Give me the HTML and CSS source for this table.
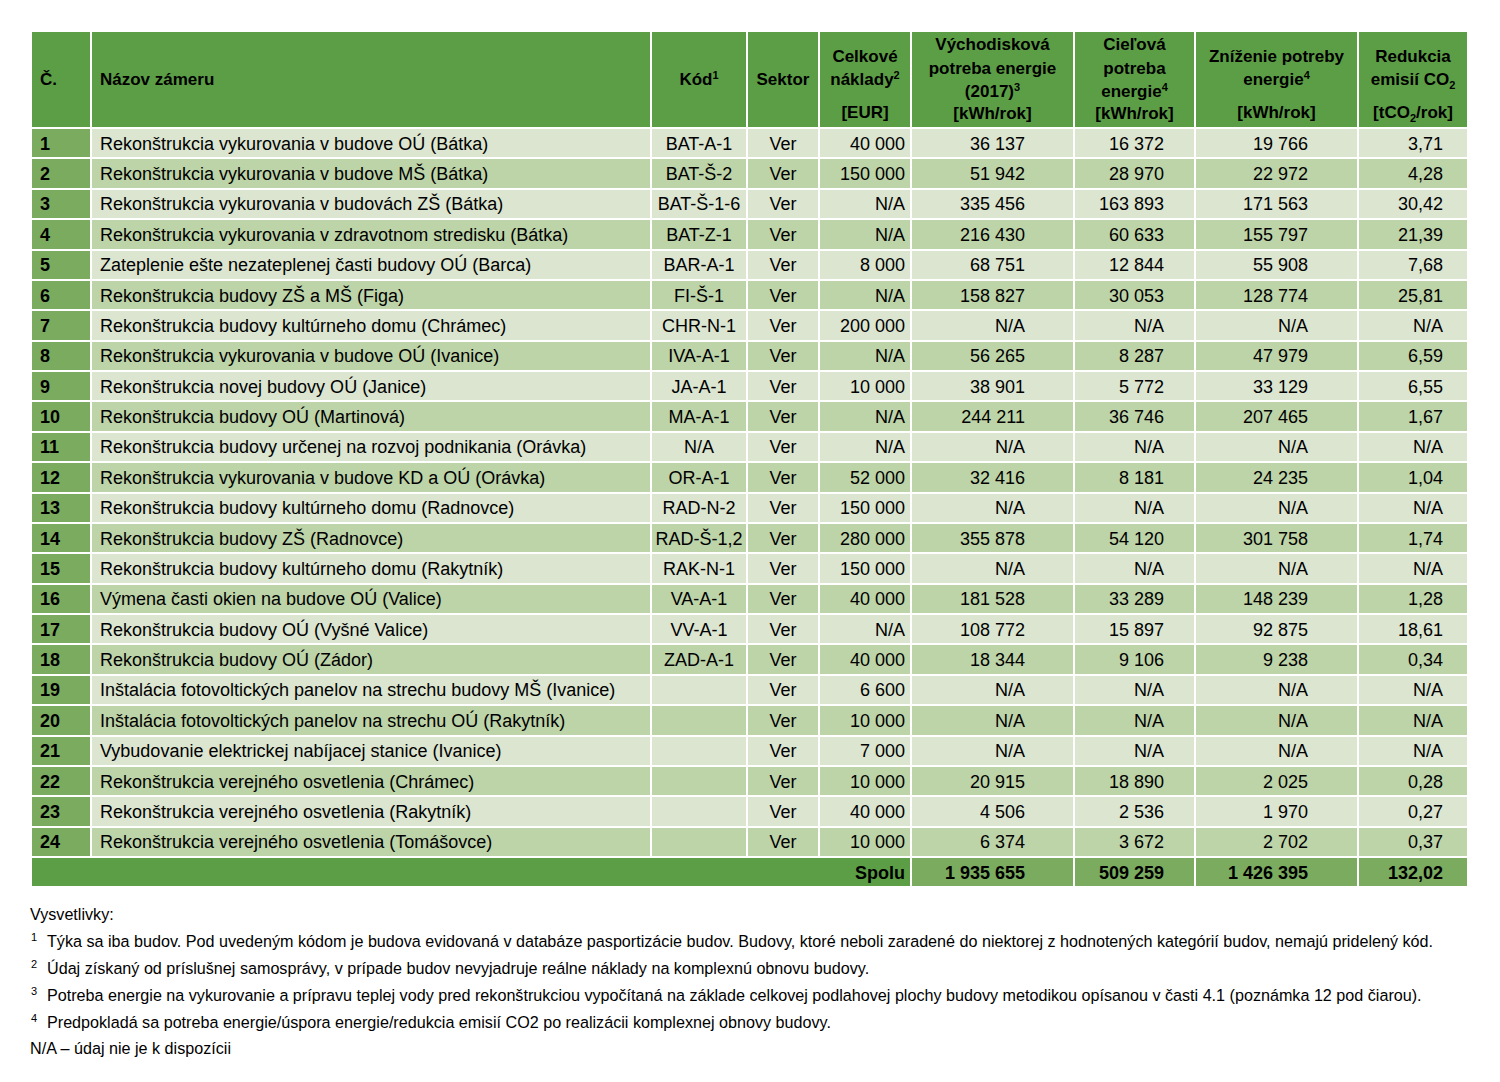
FILE: index.html
```html
<!DOCTYPE html>
<html lang="sk">
<head>
<meta charset="utf-8">
<title>Zámery</title>
<link rel="stylesheet" href="styles.css">
</head>
<body>
<div class="page">
<table class="grid">
<colgroup>
<col class="w1"><col class="w2"><col class="w3"><col class="w4"><col class="w5"><col class="w6"><col class="w7"><col class="w8"><col class="w9">
</colgroup>
<thead>
<tr>
<th class="hl">Č.</th>
<th class="hl">Názov zámeru</th>
<th>Kód<sup>1</sup></th>
<th>Sektor</th>
<th><div class="hw"><div class="ht"><span>Celkové</span><span>náklady<sup>2</sup></span></div><div class="hu">[EUR]</div></div></th>
<th><div class="hw"><div class="ht"><span>Východisková</span><span>potreba energie</span><span>(2017)<sup>3</sup></span></div><div class="hu">[kWh/rok]</div></div></th>
<th><div class="hw"><div class="ht"><span>Cieľová</span><span>potreba</span><span>energie<sup>4</sup></span></div><div class="hu">[kWh/rok]</div></div></th>
<th><div class="hw"><div class="ht"><span>Zníženie potreby</span><span>energie<sup>4</sup></span></div><div class="hu">[kWh/rok]</div></div></th>
<th><div class="hw"><div class="ht"><span>Redukcia</span><span>emisií CO<sub>2</sub></span></div><div class="hu">[tCO<sub>2</sub>/rok]</div></div></th>
</tr>
</thead>
<tbody>
<tr class="odd"><td class="n">1</td><td class="nm">Rekonštrukcia vykurovania v budove OÚ (Bátka)</td><td class="c">BAT-A-1</td><td class="c">Ver</td><td class="r5">40 000</td><td class="rv">36 137</td><td class="rc">16 372</td><td class="rz">19 766</td><td class="rr">3,71</td></tr>
<tr class="even"><td class="n">2</td><td class="nm">Rekonštrukcia vykurovania v budove MŠ (Bátka)</td><td class="c">BAT-Š-2</td><td class="c">Ver</td><td class="r5">150 000</td><td class="rv">51 942</td><td class="rc">28 970</td><td class="rz">22 972</td><td class="rr">4,28</td></tr>
<tr class="odd"><td class="n">3</td><td class="nm">Rekonštrukcia vykurovania v budovách ZŠ (Bátka)</td><td class="c">BAT-Š-1-6</td><td class="c">Ver</td><td class="r5">N/A</td><td class="rv">335 456</td><td class="rc">163 893</td><td class="rz">171 563</td><td class="rr">30,42</td></tr>
<tr class="even"><td class="n">4</td><td class="nm">Rekonštrukcia vykurovania v zdravotnom stredisku (Bátka)</td><td class="c">BAT-Z-1</td><td class="c">Ver</td><td class="r5">N/A</td><td class="rv">216 430</td><td class="rc">60 633</td><td class="rz">155 797</td><td class="rr">21,39</td></tr>
<tr class="odd"><td class="n">5</td><td class="nm">Zateplenie ešte nezateplenej časti budovy OÚ (Barca)</td><td class="c">BAR-A-1</td><td class="c">Ver</td><td class="r5">8 000</td><td class="rv">68 751</td><td class="rc">12 844</td><td class="rz">55 908</td><td class="rr">7,68</td></tr>
<tr class="even"><td class="n">6</td><td class="nm">Rekonštrukcia budovy ZŠ a MŠ (Figa)</td><td class="c">FI-Š-1</td><td class="c">Ver</td><td class="r5">N/A</td><td class="rv">158 827</td><td class="rc">30 053</td><td class="rz">128 774</td><td class="rr">25,81</td></tr>
<tr class="odd"><td class="n">7</td><td class="nm">Rekonštrukcia budovy kultúrneho domu (Chrámec)</td><td class="c">CHR-N-1</td><td class="c">Ver</td><td class="r5">200 000</td><td class="rv">N/A</td><td class="rc">N/A</td><td class="rz">N/A</td><td class="rr">N/A</td></tr>
<tr class="even"><td class="n">8</td><td class="nm">Rekonštrukcia vykurovania v budove OÚ (Ivanice)</td><td class="c">IVA-A-1</td><td class="c">Ver</td><td class="r5">N/A</td><td class="rv">56 265</td><td class="rc">8 287</td><td class="rz">47 979</td><td class="rr">6,59</td></tr>
<tr class="odd"><td class="n">9</td><td class="nm">Rekonštrukcia novej budovy OÚ (Janice)</td><td class="c">JA-A-1</td><td class="c">Ver</td><td class="r5">10 000</td><td class="rv">38 901</td><td class="rc">5 772</td><td class="rz">33 129</td><td class="rr">6,55</td></tr>
<tr class="even"><td class="n">10</td><td class="nm">Rekonštrukcia budovy OÚ (Martinová)</td><td class="c">MA-A-1</td><td class="c">Ver</td><td class="r5">N/A</td><td class="rv">244 211</td><td class="rc">36 746</td><td class="rz">207 465</td><td class="rr">1,67</td></tr>
<tr class="odd"><td class="n">11</td><td class="nm">Rekonštrukcia budovy určenej na rozvoj podnikania (Orávka)</td><td class="c">N/A</td><td class="c">Ver</td><td class="r5">N/A</td><td class="rv">N/A</td><td class="rc">N/A</td><td class="rz">N/A</td><td class="rr">N/A</td></tr>
<tr class="even"><td class="n">12</td><td class="nm">Rekonštrukcia vykurovania v budove KD a OÚ (Orávka)</td><td class="c">OR-A-1</td><td class="c">Ver</td><td class="r5">52 000</td><td class="rv">32 416</td><td class="rc">8 181</td><td class="rz">24 235</td><td class="rr">1,04</td></tr>
<tr class="odd"><td class="n">13</td><td class="nm">Rekonštrukcia budovy kultúrneho domu (Radnovce)</td><td class="c">RAD-N-2</td><td class="c">Ver</td><td class="r5">150 000</td><td class="rv">N/A</td><td class="rc">N/A</td><td class="rz">N/A</td><td class="rr">N/A</td></tr>
<tr class="even"><td class="n">14</td><td class="nm">Rekonštrukcia budovy ZŠ (Radnovce)</td><td class="c">RAD-Š-1,2</td><td class="c">Ver</td><td class="r5">280 000</td><td class="rv">355 878</td><td class="rc">54 120</td><td class="rz">301 758</td><td class="rr">1,74</td></tr>
<tr class="odd"><td class="n">15</td><td class="nm">Rekonštrukcia budovy kultúrneho domu (Rakytník)</td><td class="c">RAK-N-1</td><td class="c">Ver</td><td class="r5">150 000</td><td class="rv">N/A</td><td class="rc">N/A</td><td class="rz">N/A</td><td class="rr">N/A</td></tr>
<tr class="even"><td class="n">16</td><td class="nm">Výmena časti okien na budove OÚ (Valice)</td><td class="c">VA-A-1</td><td class="c">Ver</td><td class="r5">40 000</td><td class="rv">181 528</td><td class="rc">33 289</td><td class="rz">148 239</td><td class="rr">1,28</td></tr>
<tr class="odd"><td class="n">17</td><td class="nm">Rekonštrukcia budovy OÚ (Vyšné Valice)</td><td class="c">VV-A-1</td><td class="c">Ver</td><td class="r5">N/A</td><td class="rv">108 772</td><td class="rc">15 897</td><td class="rz">92 875</td><td class="rr">18,61</td></tr>
<tr class="even"><td class="n">18</td><td class="nm">Rekonštrukcia budovy OÚ (Zádor)</td><td class="c">ZAD-A-1</td><td class="c">Ver</td><td class="r5">40 000</td><td class="rv">18 344</td><td class="rc">9 106</td><td class="rz">9 238</td><td class="rr">0,34</td></tr>
<tr class="odd"><td class="n">19</td><td class="nm">Inštalácia fotovoltických panelov na strechu budovy MŠ (Ivanice)</td><td class="c"></td><td class="c">Ver</td><td class="r5">6 600</td><td class="rv">N/A</td><td class="rc">N/A</td><td class="rz">N/A</td><td class="rr">N/A</td></tr>
<tr class="even"><td class="n">20</td><td class="nm">Inštalácia fotovoltických panelov na strechu OÚ (Rakytník)</td><td class="c"></td><td class="c">Ver</td><td class="r5">10 000</td><td class="rv">N/A</td><td class="rc">N/A</td><td class="rz">N/A</td><td class="rr">N/A</td></tr>
<tr class="odd"><td class="n">21</td><td class="nm">Vybudovanie elektrickej nabíjacej stanice (Ivanice)</td><td class="c"></td><td class="c">Ver</td><td class="r5">7 000</td><td class="rv">N/A</td><td class="rc">N/A</td><td class="rz">N/A</td><td class="rr">N/A</td></tr>
<tr class="even"><td class="n">22</td><td class="nm">Rekonštrukcia verejného osvetlenia (Chrámec)</td><td class="c"></td><td class="c">Ver</td><td class="r5">10 000</td><td class="rv">20 915</td><td class="rc">18 890</td><td class="rz">2 025</td><td class="rr">0,28</td></tr>
<tr class="odd"><td class="n">23</td><td class="nm">Rekonštrukcia verejného osvetlenia (Rakytník)</td><td class="c"></td><td class="c">Ver</td><td class="r5">40 000</td><td class="rv">4 506</td><td class="rc">2 536</td><td class="rz">1 970</td><td class="rr">0,27</td></tr>
<tr class="even"><td class="n">24</td><td class="nm">Rekonštrukcia verejného osvetlenia (Tomášovce)</td><td class="c"></td><td class="c">Ver</td><td class="r5">10 000</td><td class="rv">6 374</td><td class="rc">3 672</td><td class="rz">2 702</td><td class="rr">0,37</td></tr>
<tr class="total"><td class="lbl r5" colspan="5">Spolu</td><td class="rv">1 935 655</td><td class="rc">509 259</td><td class="rz">1 426 395</td><td class="rr">132,02</td></tr>
</tbody>
</table>

<div class="notes">
<p class="nl">Vysvetlivky:</p>
<p class="fn"><span class="fnum">1</span><span>Týka sa iba budov. Pod uvedeným kódom je budova evidovaná v databáze pasportizácie budov. Budovy, ktoré neboli zaradené do niektorej z hodnotených kategórií budov, nemajú pridelený kód.</span></p>
<p class="fn"><span class="fnum">2</span><span>Údaj získaný od príslušnej samosprávy, v prípade budov nevyjadruje reálne náklady na komplexnú obnovu budovy.</span></p>
<p class="fn"><span class="fnum">3</span><span>Potreba energie na vykurovanie a prípravu teplej vody pred rekonštrukciou vypočítaná na základe celkovej podlahovej plochy budovy metodikou opísanou v časti 4.1 (poznámka 12 pod čiarou).</span></p>
<p class="fn"><span class="fnum">4</span><span>Predpokladá sa potreba energie/úspora energie/redukcia emisií CO2 po realizácii komplexnej obnovy budovy.</span></p>
<p class="nl">N/A – údaj nie je k dispozícii</p>
</div>
</div>
</body>
</html>
```

FILE: styles.css
```css
html, body {
  margin: 0;
  padding: 0;
  background: #ffffff;
}

body {
  font-family: "Liberation Sans", Arial, sans-serif;
  color: #000;
}

.page {
  padding: 30px 0 0 30px;
}

.grid {
  border-collapse: separate;
  border-spacing: 2px;
  table-layout: fixed;
  width: 1439px;
}

.w1 { width: 58px; }
.w2 { width: 558px; }
.w3 { width: 94px; }
.w4 { width: 70px; }
.w5 { width: 90px; }
.w6 { width: 161px; }
.w7 { width: 119px; }
.w8 { width: 161px; }
.w9 { width: 108px; }

.grid th {
  background: #5c9e45;
  height: 95px;
  padding: 0;
  font-size: 17px;
  font-weight: bold;
  text-align: center;
  vertical-align: middle;
  line-height: 23.5px;
  white-space: nowrap;
}

.grid th.hl {
  text-align: left;
  padding-left: 8px;
}

.grid sup {
  font-size: 11px;
  line-height: 0;
  vertical-align: 6px;
}

.grid sub {
  font-size: 11px;
  line-height: 0;
  vertical-align: -4px;
}

.hw {
  display: flex;
  flex-direction: column;
  height: 95px;
}

.ht {
  flex: 1;
  display: flex;
  flex-direction: column;
  justify-content: center;
  align-items: center;
  padding-top: 1px;
}

.hu {
  height: 24px;
  line-height: 20px;
  padding-bottom: 0;
}

.grid td {
  height: 27.375px;
  padding: 1px 0 0;
  font-size: 18px;
  line-height: 20px;
  vertical-align: middle;
  white-space: nowrap;
  overflow: hidden;
}

.odd td { background: #dbe5d0; }
.even td { background: #bdd3a8; }

.grid td.n {
  background: #7aab5f;
  font-weight: bold;
  padding-left: 8px;
}

.grid td.nm { padding-left: 8px; }
.grid td.c { text-align: center; }
.grid td.r5 { text-align: right; padding-right: 5px; }
.grid td.rv { text-align: right; padding-right: 48px; }
.grid td.rc { text-align: right; padding-right: 30px; }
.grid td.rz { text-align: right; padding-right: 49px; }
.grid td.rr { text-align: right; padding-right: 24px; }

.total td {
  background: #7aab5f;
  font-weight: bold;
}

.total td.lbl {
  background: #5c9e45;
}

.notes {
  margin-top: 13px;
  font-family: "Liberation Sans", Arial, sans-serif;
  font-size: 16.15px;
  line-height: 26.8px;
}

.notes p {
  margin: 0;
  white-space: nowrap;
}

.fn {
  display: flex;
}

.fnum {
  width: 17px;
  flex: none;
  font-size: 11px;
  line-height: 18px;
  padding-left: 1px;
  box-sizing: border-box;
}
```
